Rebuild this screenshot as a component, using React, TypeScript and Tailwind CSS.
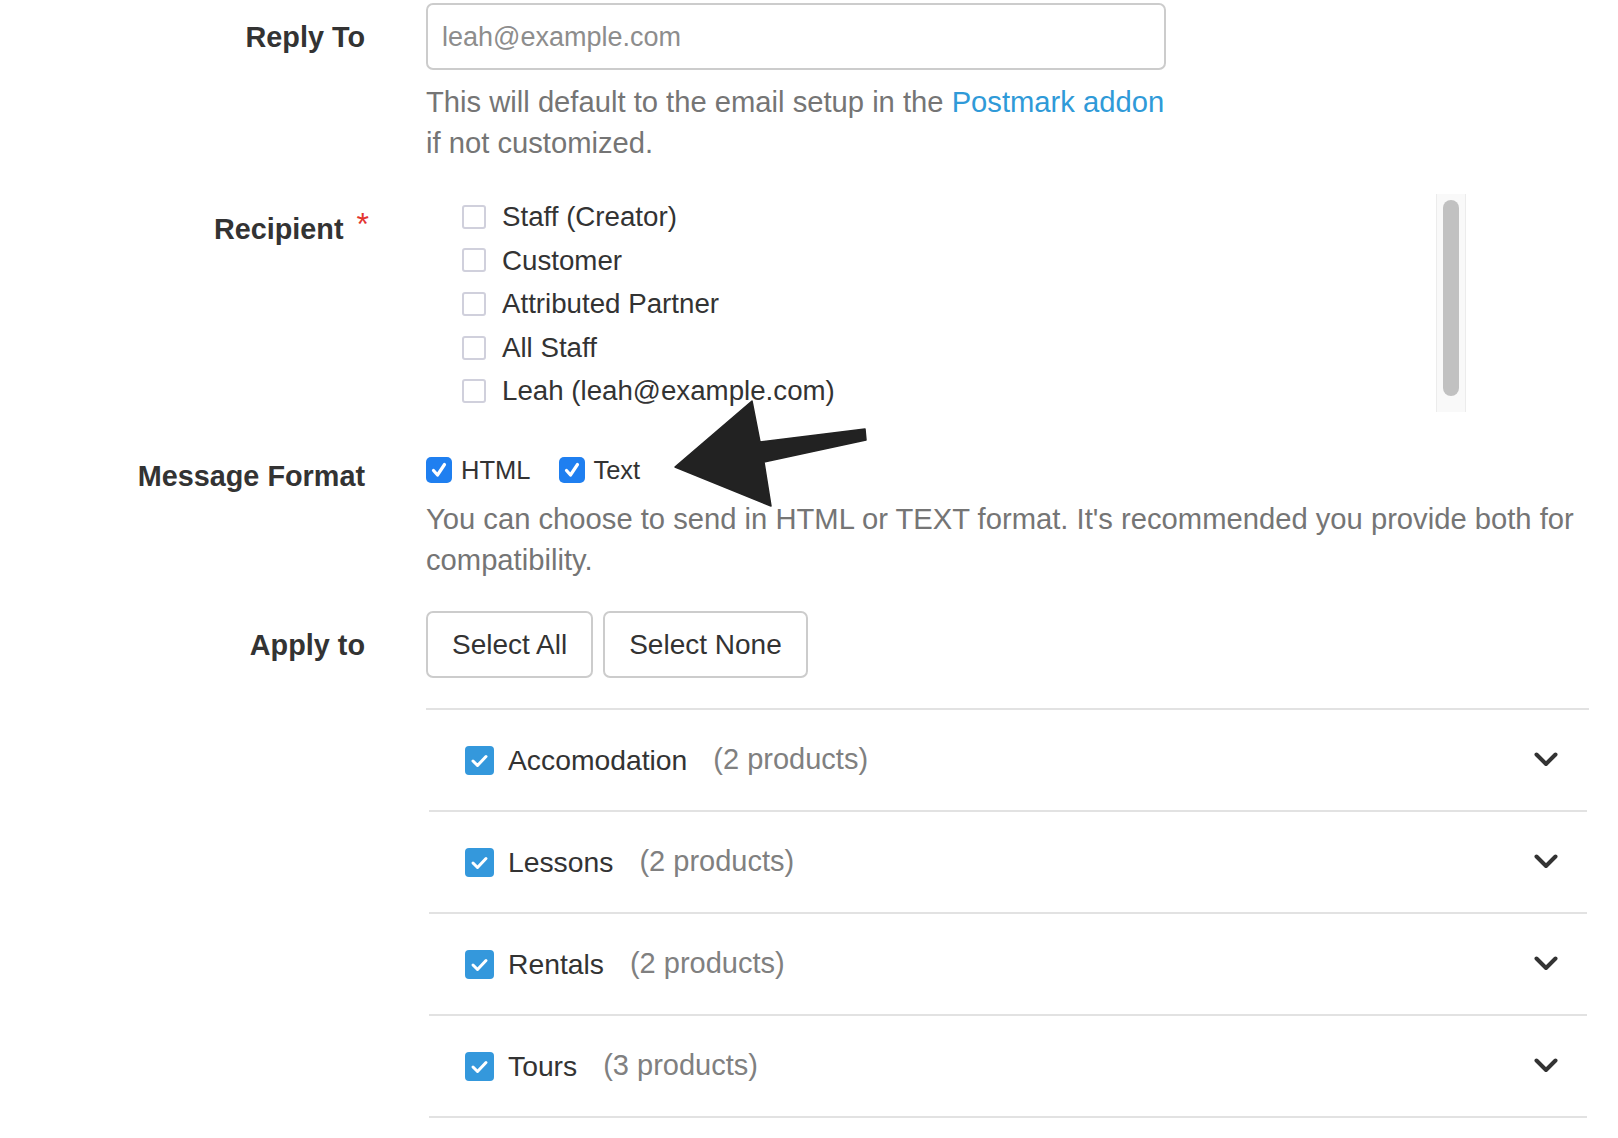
import React from "react";

const recipients = [
  "Staff (Creator)",
  "Customer",
  "Attributed Partner",
  "All Staff",
  "Leah (leah@example.com)",
];

const categories = [
  { name: "Accomodation", count: "(2 products)" },
  { name: "Lessons", count: "(2 products)" },
  { name: "Rentals", count: "(2 products)" },
  { name: "Tours", count: "(3 products)" },
];

function MacCheck() {
  return (
    <span className="flex h-[26px] w-[26px] shrink-0 items-center justify-center rounded-[5px] bg-[#1f7ff0]">
      <svg width="20" height="20" viewBox="0 0 20 20" fill="none">
        <path d="M4.5 10.5 L8.5 15 L15.5 4.5" stroke="#fff" strokeWidth="3.2" strokeLinecap="round" strokeLinejoin="round" />
      </svg>
    </span>
  );
}

function CategoryCheck() {
  return (
    <span className="flex h-[29px] w-[29px] shrink-0 items-center justify-center rounded-[4px] bg-[#3498dc]">
      <svg width="29" height="29" viewBox="0 0 29 29" fill="none">
        <path d="M8 15 L12.5 19.5 L21 10.5" stroke="#fff" strokeWidth="3" strokeLinecap="round" strokeLinejoin="round" />
      </svg>
    </span>
  );
}

function Chevron() {
  return (
    <svg width="24" height="15" viewBox="0 0 24 15" fill="none">
      <path d="M2.5 2.5 L12 12 L21.5 2.5" stroke="#333" strokeWidth="4" strokeLinecap="round" strokeLinejoin="round" />
    </svg>
  );
}

export default function App() {
  return (
    <div className="relative h-[1138px] w-[1618px] overflow-hidden bg-white pt-[3px] font-['Liberation_Sans',Arial,sans-serif] text-[#333]">
      {/* Reply To */}
      <div className="flex">
        <div className="w-[365px] shrink-0 pt-[1px] text-right text-[28.8px] font-bold leading-[67px]">Reply To</div>
        <div className="ml-[61px] w-[740px]">
          <input
            type="text"
            placeholder="leah@example.com"
            className="block h-[67px] w-full rounded-[7px] border-2 border-[#cccccc] px-[14px] pt-[2px] text-[27px] outline-none placeholder:text-[#8d8d8d]"
          />
          <p className="mt-[12px] text-[29.2px] leading-[41px] text-[#757575]">
            This will default to the email setup in the{" "}
            <a className="text-[#2f9ad8]">Postmark addon</a> if not customized.
          </p>
        </div>
      </div>

      {/* Recipient */}
      <div className="mt-[30px] flex">
        <div className="flex w-[365px] shrink-0 items-start justify-end pt-[15px]">
          <span className="text-[28.8px] font-bold leading-[40px]">Recipient</span>
          <span className="-mr-[4px] ml-[13px] text-[32px] leading-[30px] text-[#e3342f]">*</span>
        </div>
        <div className="ml-[61px] flex h-[218px] w-[1040px]">
          <div className="flex-1 pl-[36px] pt-[1px]">
            {recipients.map((r) => (
              <div key={r} className="flex h-[43.6px] items-center">
                <span className="h-[24px] w-[24px] shrink-0 rounded-[3px] border-2 border-[#d0d0dc] bg-white" />
                <span className="ml-[16px] text-[27.7px]">{r}</span>
              </div>
            ))}
          </div>
          <div className="w-[30px] border-x border-[#ececec] bg-[#f9f9f9] pb-[16px] pt-[6px]">
            <div className="mx-auto h-full w-[16px] rounded-full bg-[#c1c1c1]" />
          </div>
        </div>
      </div>

      {/* Message Format */}
      <div className="mt-[39px] flex">
        <div className="w-[365px] shrink-0 pt-[6px] text-right text-[28.8px] font-bold leading-[38px]">Message Format</div>
        <div className="ml-[61px] w-[1163px]">
          <div className="flex h-[38px] items-center text-[25.5px]">
            <MacCheck />
            <span className="ml-[9px]">HTML</span>
            <span className="ml-[29px]">
              <MacCheck />
            </span>
            <span className="ml-[8px]">Text</span>
          </div>
          <p className="mt-[10px] text-[29.2px] leading-[41px] text-[#757575]">
            You can choose to send in HTML or TEXT format. It's recommended you provide both for compatibility.
          </p>
        </div>
      </div>

      {/* Apply to */}
      <div className="mt-[30px] flex">
        <div className="w-[365px] shrink-0 pt-[1px] text-right text-[28.8px] font-bold leading-[67px]">Apply to</div>
        <div className="ml-[61px] w-[1163px]">
          <div className="flex gap-[10px]">
            <button className="h-[67px] rounded-[7px] border-2 border-[#cccccc] bg-white px-[24px] text-[28px] text-[#333]">
              Select All
            </button>
            <button className="h-[67px] rounded-[7px] border-2 border-[#cccccc] bg-white px-[24px] text-[28px] text-[#333]">
              Select None
            </button>
          </div>

          <div className="mt-[30px] border-t-2 border-[#e2e2e2]">
            {categories.map((c) => (
              <div
                key={c.name}
                className="ml-[3px] mr-[2px] flex h-[102px] items-center border-b-2 border-[#e2e2e2] pl-[36px] pr-[29px]"
              >
                <CategoryCheck />
                <span className="ml-[14px] text-[28.3px]">{c.name}</span>
                <span className="ml-[26px] text-[29px] text-[#808080]">{c.count}</span>
                <span className="ml-auto -mt-[2px]">
                  <Chevron />
                </span>
              </div>
            ))}
          </div>
        </div>
      </div>

      {/* annotation arrow drawn over the screenshot */}
      <svg className="pointer-events-none absolute left-0 top-0" width="1618" height="1138" viewBox="0 0 1618 1138">
        <polygon
          points="675,467 752,401 760,442 865,429 866,440 764,462 771,506"
          fill="#222"
          stroke="#222"
          strokeWidth="1.5"
          strokeLinejoin="round"
        />
      </svg>
    </div>
  );
}
